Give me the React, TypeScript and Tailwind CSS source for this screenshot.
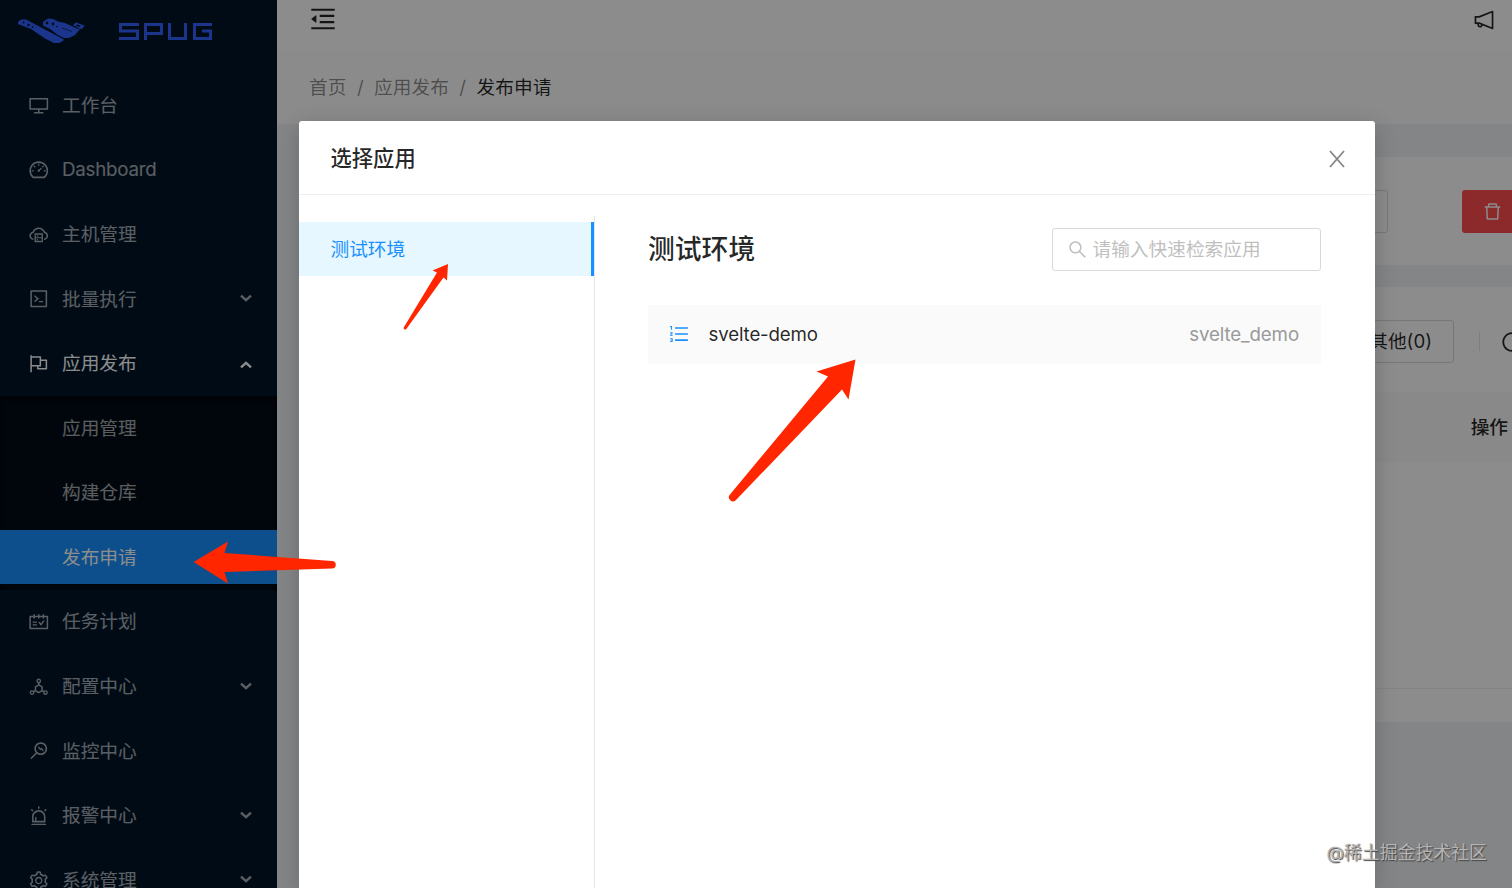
import type { ReactNode } from 'react';
import clsx from 'clsx';
import {
  AiOutlineAlert,
  AiOutlineCloudServer,
  AiOutlineCode,
  AiOutlineDashboard,
  AiOutlineDelete,
  AiOutlineDeploymentUnit,
  AiOutlineDesktop,
  AiOutlineFlag,
  AiOutlineMenuFold,
  AiOutlineMonitor,
  AiOutlineNotification,
  AiOutlineOrderedList,
  AiOutlineReload,
  AiOutlineSchedule,
  AiOutlineSearch,
  AiOutlineSetting,
} from 'react-icons/ai';

interface MenuEntry {
  label: string;
  icon: ReactNode;
  expandable?: boolean;
  open?: boolean;
  children?: string[];
}

const MENU: MenuEntry[] = [
  { label: '工作台', icon: <AiOutlineDesktop /> },
  { label: 'Dashboard', icon: <AiOutlineDashboard /> },
  { label: '主机管理', icon: <AiOutlineCloudServer /> },
  { label: '批量执行', icon: <AiOutlineCode />, expandable: true },
  {
    label: '应用发布',
    icon: <AiOutlineFlag />,
    expandable: true,
    open: true,
    children: ['应用管理', '构建仓库', '发布申请'],
  },
  { label: '任务计划', icon: <AiOutlineSchedule /> },
  { label: '配置中心', icon: <AiOutlineDeploymentUnit />, expandable: true },
  { label: '监控中心', icon: <AiOutlineMonitor /> },
  { label: '报警中心', icon: <AiOutlineAlert />, expandable: true },
  { label: '系统管理', icon: <AiOutlineSetting />, expandable: true },
];

const ACTIVE = '发布申请';

function Chevron({ up }: { up?: boolean }) {
  return (
    <svg
      className={clsx(up ? 'mt-[2px]' : '-mt-[2px]')}
      width="14"
      height="10"
      viewBox="0 0 14 10"
      fill="none"
      stroke="currentColor"
      strokeWidth="2.4"
    >
      <path d={up ? 'M2 7.3L7 2.8L12 7.3' : 'M2 2.7L7 7.2L12 2.7'} />
    </svg>
  );
}

function Logo() {
  return (
    <div className="flex h-[73px] shrink-0 items-start pl-[17px] pt-[17px] text-[#3262ff]">
      <svg width="70" height="28" viewBox="0 0 70 28" fill="none">
        <path d="M1 5L4 2.5L9 2.5L47 22.5L46 24L42 26H37L28 21.5L14 12L1 7Z" fill="currentColor" />
        <path d="M26 5L31 1.5L36 2L41 4.5L48 6L60 11.5L63 12L58 18L52 21H47L41 18L33 12L26 8.5Z" fill="currentColor" />
        <path d="M56 8L59 5.5L67.5 8.5L65 12L62 11.5Z" fill="currentColor" />
        <g fill="#001529">
          <circle cx="6.5" cy="5.5" r="1" />
          <circle cx="11.5" cy="8" r="1.2" />
          <circle cx="15.5" cy="10" r="0.9" />
          <circle cx="30" cy="6" r="1.4" />
          <circle cx="36" cy="7" r="1.4" />
          <circle cx="40" cy="9.5" r="0.8" />
          <path d="M59.5 7.5L63.5 8.5L62.5 10L59 9Z" />
        </g>
        <path d="M45 11L55 14.5" stroke="#001529" strokeWidth="0.6" />
      </svg>
      <svg className="ml-[31px] mt-[5px]" width="96" height="20" viewBox="0 0 96 20" fill="none" stroke="currentColor" strokeWidth="3">
        <polyline points="21,2.5 2.5,2.5 2.5,9 19.5,9 19.5,16.5 1,16.5" />
        <polyline points="27.5,18 27.5,2.5 43.5,2.5 43.5,11.5 27.5,11.5" />
        <polyline points="51.5,1 51.5,16.5 67.5,16.5 67.5,1" />
        <polyline points="94,2.5 76.5,2.5 76.5,16.5 92.5,16.5 92.5,9 84,9" />
      </svg>
    </div>
  );
}

function MenuItem({ entry }: { entry: MenuEntry }) {
  return (
    <li className="shrink-0">
      <div
        className={clsx(
          'my-[5.4px] flex h-[53.8px] items-center pl-[28px] pr-6',
          entry.open ? 'text-white' : 'text-white/65'
        )}
      >
        <span className="mr-[12.5px] text-[21.5px]">{entry.icon}</span>
        <span className={clsx('flex-1', entry.label === 'Dashboard' && 'tracking-[-0.2px]')}>{entry.label}</span>
        {entry.expandable && <Chevron up={entry.open} />}
      </div>
      {entry.children && (
        <ul className="flow-root bg-[#000c17] shadow-[inset_0_3px_11px_rgba(0,0,0,0.45)]">
          {entry.children.map((child) => (
            <li
              key={child}
              className={clsx(
                'mb-[10.8px] flex h-[53.8px] items-center pl-[62px] first:mt-[5.4px] last:mb-[5.4px]',
                child === ACTIVE ? 'bg-[#1890ff] text-white' : 'text-white/65'
              )}
            >
              {child}
            </li>
          ))}
        </ul>
      )}
    </li>
  );
}

function Sidebar() {
  return (
    <aside className="flex w-[277px] shrink-0 flex-col overflow-hidden bg-[#001529]">
      <Logo />
      <ul className="flex flex-col">
        {MENU.map((entry) => (
          <MenuItem key={entry.label} entry={entry} />
        ))}
      </ul>
    </aside>
  );
}

function Content() {
  return (
    <main className="flex min-w-0 flex-1 flex-col bg-[#f0f2f5]">
      <header className="flex h-[51px] shrink-0 items-start justify-between bg-white pl-[31px] pr-[16px] pt-[4px] text-black/85">
        <AiOutlineMenuFold className="text-[30px]" />
        <AiOutlineNotification className="mt-1 text-[24px]" />
      </header>
      <nav className="flex h-[73px] shrink-0 items-center gap-[10.5px] bg-[#fefefe] pl-[32px] text-black/45">
        <span>首页</span>
        <span>/</span>
        <span>应用发布</span>
        <span>/</span>
        <span className="text-black/85">发布申请</span>
      </nav>
      <section className="ml-8 mt-[33px] flex h-[108px] shrink-0 items-center bg-white">
        <div className="h-[43px] w-[1079px] rounded-[3px] border border-[#d9d9d9]" />
        <div className="ml-[74px] flex h-[43px] flex-1 items-center rounded-l-[3px] bg-[#ff4d4f] pl-[20px] text-[21px] text-white">
          <AiOutlineDelete />
        </div>
      </section>
      <section className="ml-8 mt-[22px] flex h-[435px] shrink-0 flex-col bg-white text-black/85">
        <div className="flex h-[105px] shrink-0 items-center overflow-hidden pt-[4px]">
          <div className="flex h-[43px] w-[1145px] shrink-0 items-center justify-end rounded-[3px] border border-[#d9d9d9] pr-[21px]">
            其他(0)
          </div>
          <span className="ml-[25px] h-[19px] w-px shrink-0 bg-black/10" />
          <AiOutlineReload className="ml-[20px] shrink-0 text-[24px]" />
        </div>
        <div className="flex h-[70px] shrink-0 items-center justify-end bg-[#fafafa] pr-1 font-medium">操作</div>
        <div className="h-[227px] shrink-0 border-b border-[#f0f0f0]" />
      </section>
    </main>
  );
}

function AppModal() {
  return (
    <div className="absolute bottom-0 left-[298.5px] top-[121px] flex w-[1076.5px] flex-col rounded-t-[3px] bg-white shadow-[0_5px_22px_rgba(0,0,0,0.2)]">
      <div className="flex h-[74px] shrink-0 items-center justify-between border-b border-[#f0f0f0] pl-[32px] pr-[30px] pt-px">
        <h2 className="text-[21.3px] font-medium text-black/85">选择应用</h2>
        <svg className="mt-px" width="16" height="18" viewBox="0 0 16 18" stroke="#858585" strokeWidth="1.8">
          <path d="M1 1L15 17M15 1L1 17" />
        </svg>
      </div>
      <div className="flex min-h-0 flex-1 pt-[21px]">
        <div className="w-[296px] border-r border-[#e4e4e4] pt-[6px]">
          <div className="flex h-[54px] items-center border-r-[3px] border-[#1890ff] bg-[#e6f7ff] pl-[32px] text-[#1890ff]">
            测试环境
          </div>
        </div>
        <div className="flex-1 pl-[53.5px] pr-[54px] pt-[11.5px]">
          <div className="flex items-center justify-between">
            <h3 className="text-[26.8px] font-medium leading-[42px] text-black/85">测试环境</h3>
            <div className="flex h-[43px] w-[269px] items-center gap-[5px] rounded-[3px] border border-[#d9d9d9] pl-[13.5px] text-[#bfbfbf]">
              <AiOutlineSearch className="text-[21px]" />
              <span>请输入快速检索应用</span>
            </div>
          </div>
          <div className="mt-[34px] flex h-[59px] items-center bg-[#fafafa] pl-[19.5px] pr-[22px] text-black/85">
            <AiOutlineOrderedList className="mr-[19px] text-[22px] text-[#1890ff]" />
            <span className="flex-1 tracking-[-0.15px]">svelte-demo</span>
            <span className="tracking-[-0.1px] text-[#999]">svelte_demo</span>
          </div>
        </div>
      </div>
    </div>
  );
}

// hand-drawn pointers lying over the whole screen
function Arrows() {
  return (
    <svg className="pointer-events-none absolute inset-0" width="1512" height="888" viewBox="0 0 1512 888" fill="#ff2600">
      <path d="M855.5 359.5L816.5 371.5L828 376.5L730 494.5A4 4 0 0 0 736 500L842 389.5L848.5 399.5Z" />
      <path d="M448 264L432.5 270.5L437 272.5L404 327A1.4 1.4 0 0 0 406.3 329L443.5 277.5L447 280.5Z" />
      <path d="M193.5 562L228 541.5L224.5 553L332 561A3.5 3.5 0 0 1 332 568.5L224.5 572L228 583.5Z" />
    </svg>
  );
}

export default function App() {
  return (
    <div className="relative flex h-[888px] w-[1512px] overflow-hidden font-[Inter,'Noto_Sans_CJK_SC',sans-serif] text-[18.7px] leading-[29px]">
      <Sidebar />
      <Content />
      <div className="absolute inset-0 bg-black/45" />
      <AppModal />
      <Arrows />
      <div className="absolute bottom-[20px] right-[25px] text-[17.9px] leading-[30px] text-[#b4b4b4] [text-shadow:1px_1px_1px_#444]">
        @稀土掘金技术社区
      </div>
    </div>
  );
}
